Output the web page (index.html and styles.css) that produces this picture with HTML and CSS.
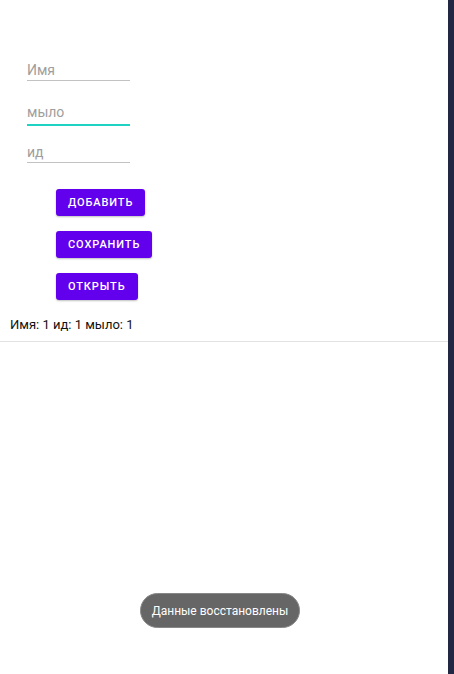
FILE: index.html
```html
<!DOCTYPE html>
<html lang="ru">
<head>
<meta charset="utf-8">
<link rel="stylesheet" href="styles.css">
</head>
<body>
<div class="screen">
  <div class="app">
    <div class="fields">
      <div class="field">Имя</div>
      <div class="field field--focused">мыло</div>
      <div class="field field--last">ид</div>
    </div>
    <div class="buttons">
      <button class="btn">ДОБАВИТЬ</button>
      <button class="btn">СОХРАНИТЬ</button>
      <button class="btn">ОТКРЫТЬ</button>
    </div>
    <div class="result">Имя: 1 ид: 1 мыло: 1</div>
    <div class="divider"></div>
    <div class="toast">Данные восстановлены</div>
  </div>
  <div class="edge"></div>
</div>
</body>
</html>
```
FILE: styles.css
```css
html, body {
  margin: 0;
  padding: 0;
  background: #fff;
  font-family: Roboto, "Noto Sans", sans-serif;
}
.screen {
  display: flex;
  width: 454px;
  height: 674px;
  overflow: hidden;
}
.app {
  position: relative;
  flex: 0 0 448px;
  display: flex;
  flex-direction: column;
}
.edge {
  flex: 0 0 6px;
  background: #222743;
}
.fields {
  display: flex;
  flex-direction: column;
  margin: 61px 0 0 27px;
  width: 103px;
}
.field {
  font-size: 14px;
  line-height: 18px;
  color: #9e9e9e;
  padding-bottom: 1px;
  border-bottom: 1px solid #c2c2c2;
  margin-bottom: 22px;
}
.field--focused {
  padding-bottom: 3px;
  border-bottom: 2px solid #1fd3c4;
  margin-bottom: 17px;
}
.field--last {
  margin-bottom: 0;
}
.buttons {
  display: flex;
  flex-direction: column;
  align-items: flex-start;
  gap: 15px;
  margin: 26px 0 0 56px;
}
.btn {
  height: 27px;
  padding: 0 12px;
  border: none;
  border-radius: 3px;
  background: #6200ee;
  color: #fff;
  font-family: Roboto, sans-serif;
  font-weight: 500;
  font-size: 11px;
  letter-spacing: 0.9px;
  box-shadow: 0 1px 2px rgba(0,0,0,0.25);
}
.result {
  margin: 17px 0 0 10px;
  font-size: 13px;
  line-height: 16px;
  color: #111;
}
.divider {
  margin-top: 8px;
  height: 1px;
  background: #e2e2e2;
}
.toast {
  position: absolute;
  left: 140px;
  top: 593px;
  width: 160px;
  height: 35px;
  border-radius: 18px;
  background: #666;
  border: 1px solid #888;
  box-sizing: border-box;
  color: #fff;
  font-size: 12px;
  display: flex;
  align-items: center;
  justify-content: center;
}
```
